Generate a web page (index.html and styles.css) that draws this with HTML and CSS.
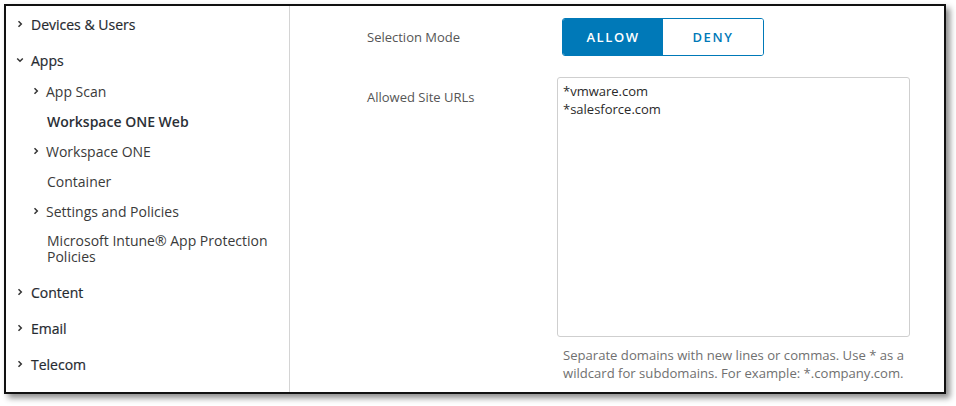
FILE: index.html
```html
<!DOCTYPE html>
<html lang="en">
<head>
<meta charset="utf-8">
<title>Workspace ONE Web</title>
<link rel="stylesheet" href="styles.css">
</head>
<body>
<div class="frame">
  <nav class="sidebar">
    <div class="top-item"><svg class="chev" viewBox="0 0 8 8"><path d="M2.5 1.2 L5.3 4 L2.5 6.8"/></svg><span>Devices &amp; Users</span></div>
    <div class="top-item"><svg class="chev" viewBox="0 0 8 8"><path d="M1.2 2.5 L4 5.3 L6.8 2.5"/></svg><span>Apps</span></div>
    <ul class="sub-list">
      <li class="sub-item"><svg class="chev" viewBox="0 0 8 8"><path d="M2.5 1.2 L5.3 4 L2.5 6.8"/></svg><span>App Scan</span></li>
      <li class="sub-item active"><span>Workspace ONE Web</span></li>
      <li class="sub-item"><svg class="chev" viewBox="0 0 8 8"><path d="M2.5 1.2 L5.3 4 L2.5 6.8"/></svg><span>Workspace ONE</span></li>
      <li class="sub-item"><span>Container</span></li>
      <li class="sub-item"><svg class="chev" viewBox="0 0 8 8"><path d="M2.5 1.2 L5.3 4 L2.5 6.8"/></svg><span>Settings and Policies</span></li>
      <li class="sub-item multi"><span>Microsoft Intune® App Protection Policies</span></li>
    </ul>
    <div class="top-item"><svg class="chev" viewBox="0 0 8 8"><path d="M2.5 1.2 L5.3 4 L2.5 6.8"/></svg><span>Content</span></div>
    <div class="top-item"><svg class="chev" viewBox="0 0 8 8"><path d="M2.5 1.2 L5.3 4 L2.5 6.8"/></svg><span>Email</span></div>
    <div class="top-item"><svg class="chev" viewBox="0 0 8 8"><path d="M2.5 1.2 L5.3 4 L2.5 6.8"/></svg><span>Telecom</span></div>
  </nav>
  <main class="content">
    <div class="form">
      <div class="label mode-label">Selection Mode</div>
      <div class="toggle">
        <button class="seg on">ALLOW</button>
        <button class="seg">DENY</button>
      </div>
      <div class="label urls-label">Allowed Site URLs</div>
      <div class="field">
        <div class="textarea">*vmware.com<br>*salesforce.com</div>
        <p class="help">Separate domains with new lines or commas. Use * as a wildcard for subdomains. For example: *.company.com.</p>
      </div>
    </div>
  </main>
</div>
</body>
</html>
```
FILE: styles.css
```css
* { box-sizing: border-box; }
html, body { margin: 0; padding: 0; background: #fff; }
body {
  font-family: "Open Sans", "Liberation Sans", sans-serif;
  color: #313131;
  width: 956px;
  height: 406px;
  overflow: hidden;
}
.frame {
  margin: 4px 0 0 4px;
  width: 942px;
  height: 390px;
  border: 2px solid #111;
  background: #fff;
  box-shadow: 4px 4px 6px rgba(0,0,0,0.45);
  display: flex;
}
.sidebar {
  width: 284px;
  flex: none;
  border-right: 1px solid #d4d4d4;
  padding-top: 0;
}
.chev {
  width: 8px;
  height: 8px;
  fill: none;
  stroke: #333;
  stroke-width: 1.5;
  flex: none;
}
.top-item {
  height: 36px;
  display: flex;
  align-items: center;
  padding-left: 10px;
  font-size: 14px;
  font-weight: 500;
  color: #262a30;
  -webkit-text-stroke: 0.2px #262a30;
}
.top-item .chev { margin-right: 7px; }
.sub-list {
  list-style: none;
  margin: -2px 0 2px 0;
  padding: 0;
}
.sub-item {
  min-height: 30px;
  display: flex;
  align-items: center;
  padding-left: 27px;
  font-size: 14px;
  color: #3a3a3a;
}
.sub-item .chev { margin-left: -1px; margin-right: 6px; }
.sub-item > span:only-child { margin-left: 14px; }
.sub-item.active { font-weight: 600; color: #2b2f36; }
.sub-item.multi { padding-top: 7px; padding-bottom: 7px; line-height: 16px; padding-right: 10px; }
.content {
  flex: 1;
  padding: 12px 0 0 77px;
}
.form {
  display: grid;
  grid-template-columns: 190px 353px;
  grid-template-rows: 38px auto;
  row-gap: 21px;
}
.label {
  font-size: 13px;
  color: #565656;
  line-height: 18px;
}
.mode-label { align-self: center; }
.urls-label { margin-top: 11px; }
.toggle {
  display: flex;
  margin-left: 5px;
  width: 202px;
  height: 38px;
  border: 1px solid #0079b8;
  border-radius: 3px;
  overflow: hidden;
}
.seg {
  flex: 1;
  border: 0;
  margin: 0;
  padding: 0;
  background: #fff;
  color: #0079b8;
  font-family: "Open Sans", "Liberation Sans", sans-serif;
  font-size: 13px;
  font-weight: 600;
  letter-spacing: 1.6px;
}
.seg.on { background: #0079b8; color: #fff; }
.textarea {
  height: 260px;
  border: 1px solid #cfcfcf;
  border-radius: 3px;
  padding: 4px 5px;
  font-size: 13px;
  line-height: 18px;
  color: #2a2a2a;
}
.help {
  margin: 9px 0 0 0;
  padding: 0 0 0 6px;
  font-size: 13.1px;
  line-height: 18px;
  color: #707070;
}
```
